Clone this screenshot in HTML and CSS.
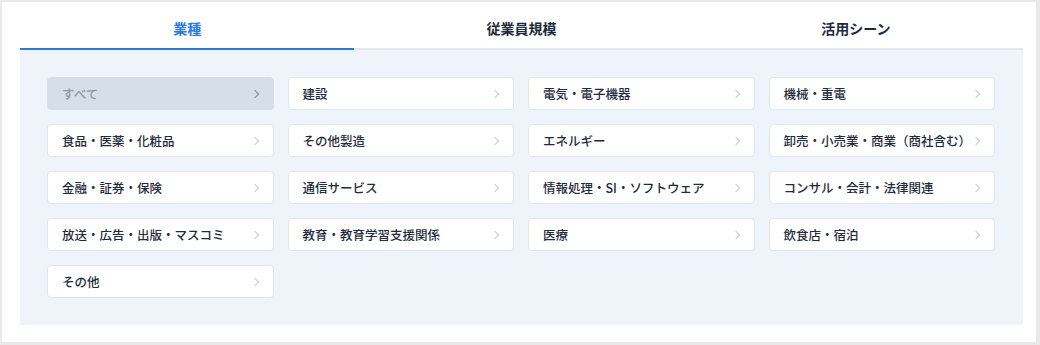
FILE: index.html
```html
<!DOCTYPE html>
<html lang="ja">
<head>
    <meta charset="UTF-8">
    <meta name="viewport" content="width=device-width, initial-scale=1.0">
    <title>業種から探す</title>
    <link rel="stylesheet" href="styles.css">
</head>
<body>
    <div class="frame">
        <div class="tabs">
            <div class="tab active">業種</div>
            <div class="tab">従業員規模</div>
            <div class="tab">活用シーン</div>
        </div>
        <div class="panel">
            <a class="item selected" href="#">すべて<span class="chev"></span></a>
            <a class="item" href="#">建設<span class="chev"></span></a>
            <a class="item" href="#">電気・電子機器<span class="chev"></span></a>
            <a class="item" href="#">機械・重電<span class="chev"></span></a>
            <a class="item" href="#">食品・医薬・化粧品<span class="chev"></span></a>
            <a class="item" href="#">その他製造<span class="chev"></span></a>
            <a class="item" href="#">エネルギー<span class="chev"></span></a>
            <a class="item" href="#">卸売・小売業・商業（商社含む）<span class="chev"></span></a>
            <a class="item" href="#">金融・証券・保険<span class="chev"></span></a>
            <a class="item" href="#">通信サービス<span class="chev"></span></a>
            <a class="item" href="#">情報処理・SI・ソフトウェア<span class="chev"></span></a>
            <a class="item" href="#">コンサル・会計・法律関連<span class="chev"></span></a>
            <a class="item" href="#">放送・広告・出版・マスコミ<span class="chev"></span></a>
            <a class="item" href="#">教育・教育学習支援関係<span class="chev"></span></a>
            <a class="item" href="#">医療<span class="chev"></span></a>
            <a class="item" href="#">飲食店・宿泊<span class="chev"></span></a>
            <a class="item" href="#">その他<span class="chev"></span></a>
        </div>
    </div>
</body>
</html>
```

FILE: styles.css
```css
body {
    margin: 0;
    padding: 2px 4px 3px 2px;
    background-color: #e9e9e9;
    font-family: "Noto Sans CJK JP", "Noto Sans", sans-serif;
}
.frame {
    height: 340px;
    box-sizing: border-box;
    padding: 0 13px 0 18px;
    background-color: #fff;
}
.tabs {
    display: flex;
}
.tab {
    flex: 1;
    height: 46px;
    line-height: 53px;
    text-align: center;
    font-size: 14px;
    font-weight: 700;
    color: #1d2a39;
    border-bottom: 2px solid #e1e7ee;
}
.tab.active {
    color: #2b78dd;
    border-bottom-color: #2b78dd;
}
.panel {
    display: grid;
    grid-template-columns: repeat(4, 1fr);
    grid-auto-rows: 33px;
    gap: 14px 14px;
    padding: 27px 28px 27px 27px;
    background-color: #eff4fb;
}
.item {
    display: flex;
    align-items: center;
    justify-content: space-between;
    padding: 0 13px 0 14px;
    background-color: #fff;
    border: 1px solid #e0e6ee;
    border-radius: 4px;
    font-size: 12.5px;
    font-weight: 500;
    color: #1f2b3a;
    text-decoration: none;
    white-space: nowrap;
}
.chev {
    width: 5px;
    height: 5px;
    margin-right: 2px;
    border-top: 1.5px solid #c2cad3;
    border-right: 1.5px solid #c2cad3;
    transform: rotate(45deg);
}
.item.selected {
    background-color: #d6dee7;
    border-color: #d6dee7;
    color: #8b97a4;
}
.item.selected .chev {
    border-color: #7f8b98;
}
```
